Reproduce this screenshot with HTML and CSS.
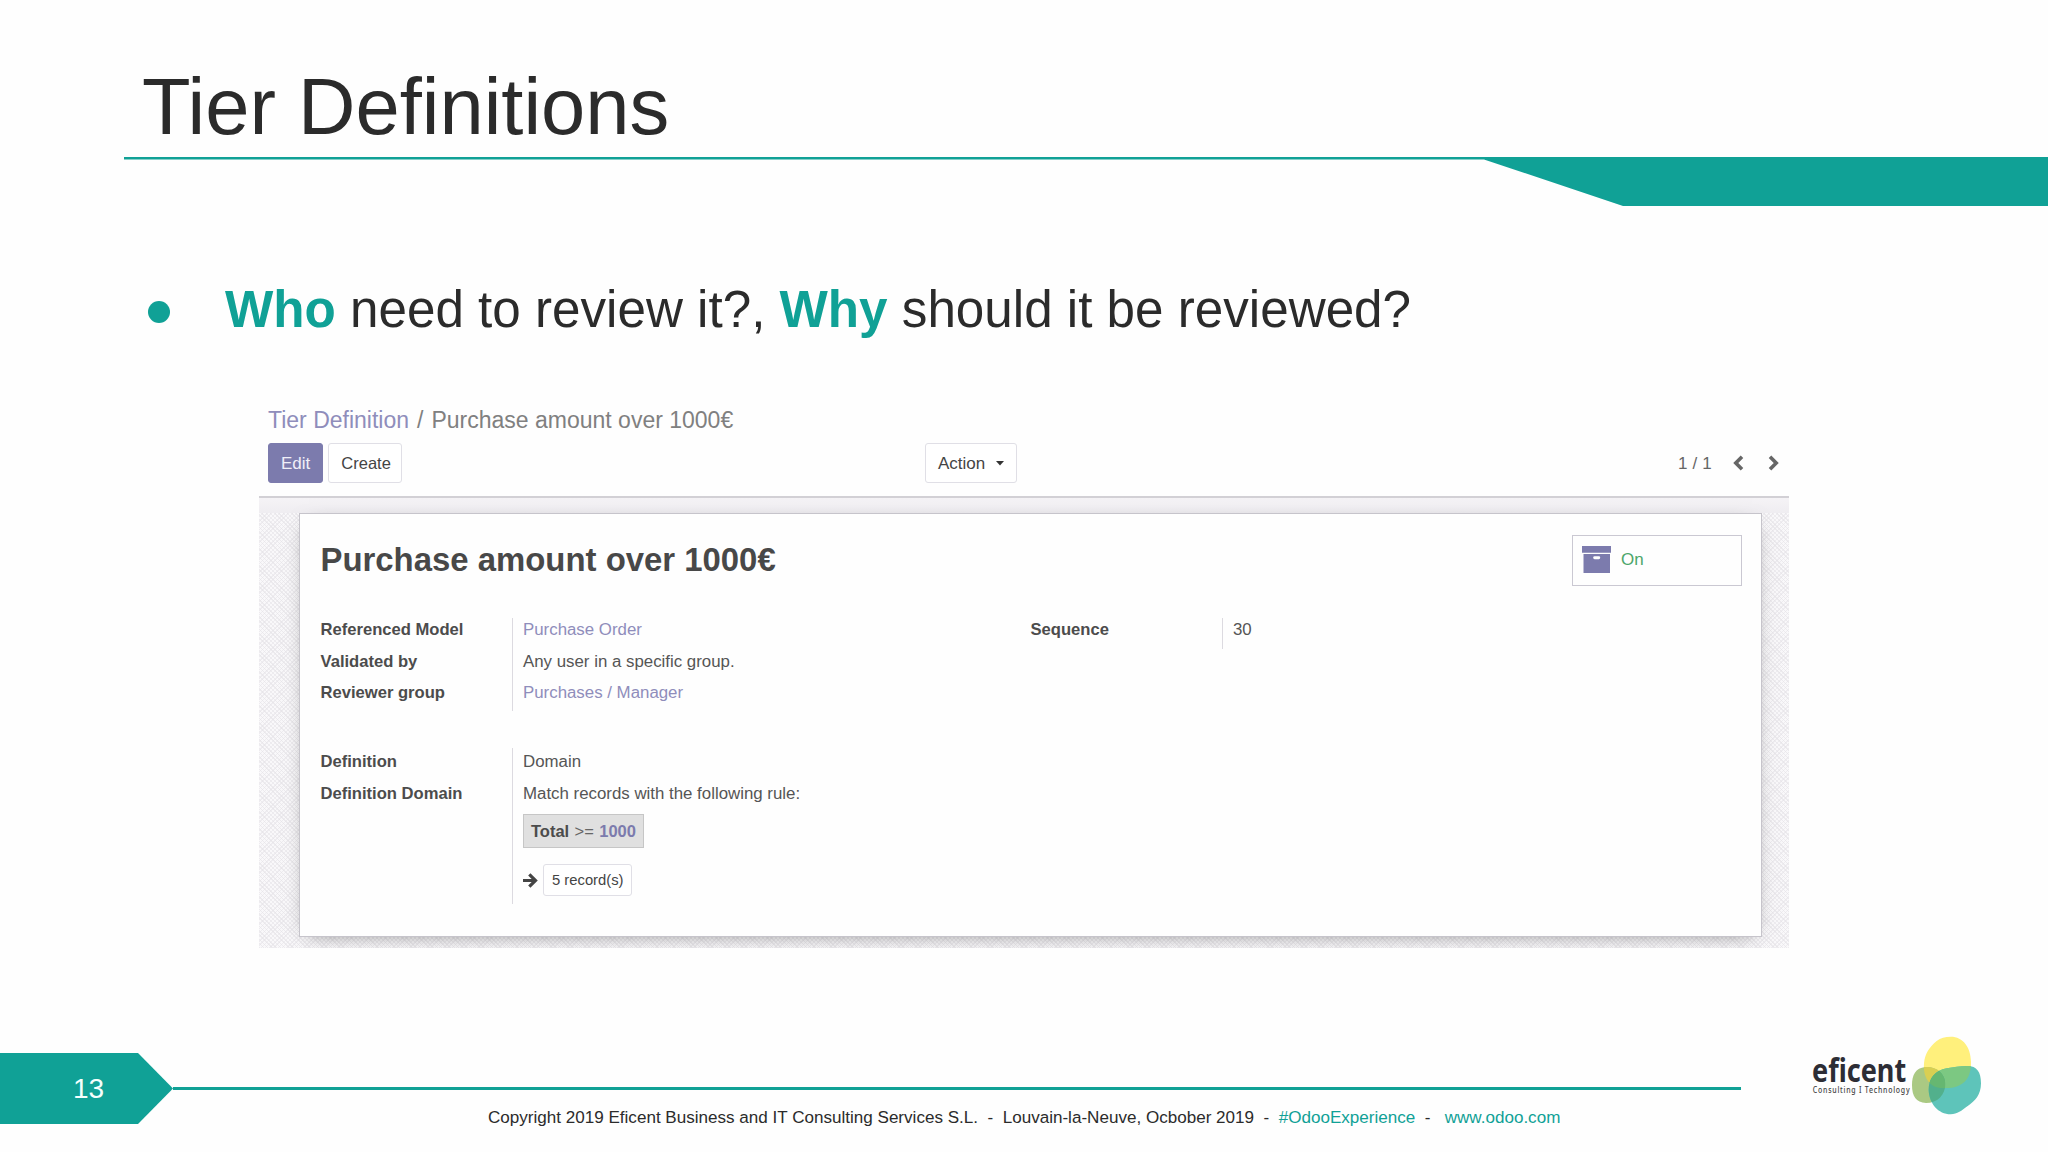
FILE: index.html
```html
<!DOCTYPE html>
<html lang="en">
<head>
<meta charset="utf-8">
<title>Tier Definitions</title>
<link rel="stylesheet" href="styles.css">
</head>
<body>
<main class="slide">
  <header class="head">
    <h1 class="title">Tier Definitions</h1>
    <svg class="rule" width="1924" height="49" viewBox="0 0 1924 49"><path d="M0 0H1924V49H1499L1360 2.4H0Z" fill="#10a196"/></svg>
  </header>

  <p class="point"><i class="dot"></i><span class="point-text"><b>Who</b> need to review it?, <b>Why</b> should it be reviewed?</span></p>

  <section class="app">
    <div class="crumbs"><span class="link">Tier Definition</span><span class="sep">/</span>Purchase amount over 1000€</div>
    <div class="toolbar">
      <div class="left"><span class="btn primary">Edit</span><span class="btn create">Create</span></div>
      <span class="btn action">Action<svg width="8" height="5" viewBox="0 0 8 5"><path d="M0 0H8L4 4.6Z" fill="#333"/></svg></span>
      <div class="pager"><span>1 / 1</span>
        <svg width="11" height="16" viewBox="0 0 11 16"><path d="M9 1.8L2.8 8L9 14.2" /></svg>
        <svg width="11" height="16" viewBox="0 0 11 16"><path d="M2 1.8L8.2 8L2 14.2" /></svg>
      </div>
    </div>
    <div class="backdrop">
      <div class="sheet">
        <div class="sheet-head">
          <h2>Purchase amount over 1000€</h2>
          <div class="stat">
            <svg width="30" height="28" viewBox="0 0 30 28"><path d="M0 0H29V6.8H0ZM1.5 8H28V27H1.5Z" fill="#7c7bad"/><rect x="11.2" y="10.2" width="7" height="3" rx="1.4" fill="#fff"/></svg>
            <span>On</span>
          </div>
        </div>
        <div class="columns">
          <dl class="group first">
            <dt>Referenced Model</dt><dd class="link">Purchase Order</dd>
            <dt>Validated by</dt><dd>Any user in a specific group.</dd>
            <dt>Reviewer group</dt><dd class="link">Purchases / Manager</dd>
          </dl>
          <dl class="group seq"><dt>Sequence</dt><dd>30</dd></dl>
        </div>
        <dl class="group second">
          <dt>Definition</dt><dd>Domain</dd>
          <dt>Definition Domain</dt>
          <dd>Match records with the following rule:
            <div class="domain"><b>Total</b><span>&gt;=</span><b class="num">1000</b></div>
            <div class="records">
              <svg width="15" height="15" viewBox="0 0 15 15"><path d="M0 7.5H12M6.3 1.3L12.5 7.5L6.3 13.7" fill="none" stroke="#444" stroke-width="3.2"/></svg>
              <span class="btn small">5 record(s)</span>
            </div>
          </dd>
        </dl>
      </div>
    </div>
  </section>

  <footer class="foot">
    <div class="page">13</div>
    <div class="foot-mid">
      <div class="foot-line"></div>
      <p class="copy">Copyright 2019 Eficent Business and IT Consulting Services S.L. &nbsp;- &nbsp;Louvain-la-Neuve, Ocbober 2019 &nbsp;- &nbsp;<span class="teal">#OdooExperience</span> &nbsp;- &nbsp; <span class="teal">www.odoo.com</span></p>
    </div>
    <div class="logo">
      <div class="logo-text"><span class="brand">eficent</span><span class="tag">Consulting I Technology</span></div>
      <svg class="blobs" width="74" height="82" viewBox="690 45 222 246">
        <defs>
          <path id="sun" d="M812 50C850 50 872 82 873 125C874 160 862 185 840 195C820 206 790 208 765 200C740 190 729 160 732 130C735 100 748 82 770 63C782 53 795 50 812 50Z"/>
          <path id="leaf" d="M736 141C765 138 796 158 796 192C796 225 772 249 738 249C708 248 696 228 696 196C696 165 706 144 736 141Z"/>
          <path id="sea" d="M860 138C890 137 903 155 903 190C903 225 885 243 862 259C845 272 832 283 812 283C775 283 747 250 746 210C746 175 765 152 800 145C820 141 840 139 860 138Z"/>
          <clipPath id="in-sun"><use href="#sun"/></clipPath>
          <clipPath id="in-leaf"><use href="#leaf"/></clipPath>
        </defs>
        <use href="#sun" fill="#fff07c"/>
        <use href="#leaf" fill="#aac983"/>
        <use href="#leaf" fill="#d9cf52" clip-path="url(#in-sun)"/>
        <use href="#sea" fill="#5ec4ba"/>
        <use href="#sea" fill="#7cc882" clip-path="url(#in-sun)"/>
        <use href="#sea" fill="#52b08c" clip-path="url(#in-leaf)"/>
        <g clip-path="url(#in-leaf)"><use href="#sea" fill="#66b771" clip-path="url(#in-sun)"/></g>
      </svg>
    </div>
  </footer>
</main>
</body>
</html>
```
FILE: styles.css
```css
* { box-sizing: border-box; margin: 0; padding: 0; }
body { background: #fefefe; font-family: "Liberation Sans", Arial, sans-serif; color: #2b2b2b; overflow: hidden; }
svg { display: block; flex: none; }
.slide { width: 2048px; height: 1152px; display: flex; flex-direction: column; }

.head { height: 206px; padding-top: 61px; flex: none; }
.title { height: 96px; padding-left: 142px; font-size: 79.5px; line-height: 91px; font-weight: 400; white-space: nowrap; }
.rule { margin-left: 124px; }

.point { margin: 74px 0 0 148px; height: 60px; display: flex; align-items: center; font-size: 51.18px; line-height: 60px; white-space: nowrap; }
.dot { width: 22px; height: 22px; margin: 4px 55px 0 0; border-radius: 50%; background: #10a196; }
.point b, .teal { color: #10a196; }

.app { width: 1530px; height: 543px; margin: 65px 0 0 259px; display: flex; flex-direction: column; font-size: 17px; color: #555; }
.crumbs { height: 38px; padding-left: 9px; font-size: 23px; line-height: 30px; color: #808080; }
.sep { margin: 0 8px; }
.link { color: #8f8dbb; }
.toolbar { height: 55px; padding-left: 9px; display: flex; align-items: flex-start; border-bottom: 2px solid #d2d0d5; }
.left { width: 657px; display: flex; gap: 5px; }
.btn { height: 40px; padding: 0 12px; border: 1px solid #e0dfe6; border-radius: 3px; line-height: 40px; color: #444; white-space: nowrap; background: #fff; }
.primary { background: #7c7bad; border-color: #7c7bad; color: #f0eff8; }
.create { width: 74px; font-size: 16.5px; line-height: 39px; }
.action { width: 92px; padding-top: 1px; display: flex; align-items: center; justify-content: space-between; }
.pager { flex: 1; height: 40px; padding-right: 10px; display: flex; align-items: center; justify-content: flex-end; gap: 24px; color: #666; }
.pager span { margin: 2px -3px 0 0; letter-spacing: .2px; }
.pager svg { fill: none; stroke: #666; stroke-width: 3.6; }

.backdrop { height: 450px; padding: 15px 27px 11px 40px; overflow: hidden; background: linear-gradient(#f5f3f6, #efedf1) top / 100% 15px no-repeat, repeating-linear-gradient(45deg, rgba(228,226,230,.6) 0 1px, transparent 1px 3px), repeating-linear-gradient(-45deg, #eeecf0 0 1px, #f9f8fa 1px 3px); }
.sheet { height: 424px; padding: 21px 19px 0 20.5px; border: 1px solid #c6c4cb; background: #fefefe; box-shadow: 0 5px 20px -10px rgba(0,0,0,.55); }
.sheet-head { height: 83px; display: flex; justify-content: space-between; }
h2 { font-size: 32.9px; line-height: 49px; color: #484848; white-space: nowrap; }
.stat { width: 170px; height: 51px; border: 1.5px solid #cac8d2; padding: 0 9px 1px; display: flex; align-items: center; gap: 9px; color: #4da66b; }
.columns { display: flex; align-items: flex-start; }
.group { display: grid; grid-template-columns: 191.5px auto; line-height: 24px; row-gap: 7.5px; white-space: nowrap; position: relative; font-size: 16.85px; }
.group::before { content: ""; position: absolute; left: 191.5px; top: 0; bottom: 0; border-left: 1px solid #dcdae0; }
dt { font-size: 16.6px; font-weight: 700; color: #4c4c4c; }
dd { padding-left: 11px; }
.first { width: 710px; height: 93px; align-content: start; }
.seq { height: 31px; }
.second { margin-top: 37px; height: 156px; padding-top: 1.5px; align-content: start; width: 700px; row-gap: 8.5px; }
.domain { width: 121px; height: 34px; margin-top: 8px; padding: 0 7px; border: 1px solid #c6c6c6; background: #e0e0e0; display: flex; justify-content: space-between; align-items: center; font-size: 16.5px; line-height: 30px; color: #666; }
.domain b { color: #4c4c4c; }
.domain .num { color: #7c7bad; }
.records { margin-top: 16px; display: flex; align-items: center; gap: 5px; }
.small { width: 89px; height: 32px; line-height: 30px; padding: 0 8px; font-size: 14.8px; }

.foot { height: 117px; margin-top: auto; display: flex; align-items: flex-start; }
.page { width: 173px; height: 71px; margin-top: 18px; padding-left: 73px; font-size: 28px; line-height: 71px; color: #f4fffd; background: #10a196; clip-path: polygon(0 0, 138px 0, 100% 50%, 138px 100%, 0 100%); }
.foot-mid { width: 1568px; padding-top: 52px; }
.foot-line { height: 2.5px; background: #10a196; }
.copy { margin: 16px 0 0 315px; font-size: 17.07px; line-height: 24px; white-space: nowrap; color: #2b2b2b; }
.logo { display: flex; padding-left: 71px; }
.logo-text { width: 98px; padding-top: 21px; display: flex; flex-direction: column; }
.brand { font: 700 33px/28px "Noto Sans", sans-serif; color: #2d2d35; transform: scaleX(.82); transform-origin: left; }
.tag { font: 500 8.2px/10px "Noto Sans", sans-serif; letter-spacing: .9px; color: #444; white-space: nowrap; width: max-content; margin-top: 1px; padding-left: 1px; transform: scaleX(.85); transform-origin: left; }
```
